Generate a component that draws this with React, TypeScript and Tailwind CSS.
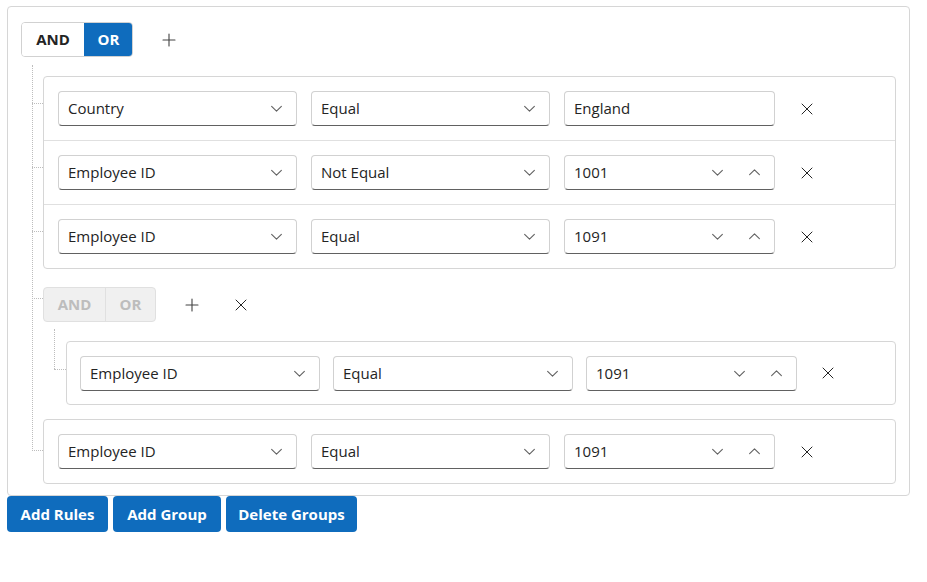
import React from "react";

const font = { fontFamily: '"Segoe UI", "Open Sans", "Noto Sans", sans-serif' };

function ChevronDown() {
  return (
    <svg width="13" height="13" viewBox="0 0 12 12" fill="none">
      <path d="M1.5 4l4.5 4.5L10.5 4" stroke="#616161" strokeWidth="1" strokeLinecap="round" strokeLinejoin="round" />
    </svg>
  );
}
function ChevronUp() {
  return (
    <svg width="13" height="13" viewBox="0 0 12 12" fill="none">
      <path d="M1.5 8l4.5-4.5L10.5 8" stroke="#616161" strokeWidth="1" strokeLinecap="round" strokeLinejoin="round" />
    </svg>
  );
}
function XIcon() {
  return (
    <svg width="12" height="12" viewBox="0 0 12 12" fill="none">
      <path d="M1 1l10 10M11 1L1 11" stroke="#242424" strokeWidth="1" strokeLinecap="round" />
    </svg>
  );
}
function PlusIcon() {
  return (
    <svg width="14" height="14" viewBox="0 0 14 14" fill="none">
      <path d="M7 1v12M1 7h12" stroke="#424242" strokeWidth="1.1" strokeLinecap="round" />
    </svg>
  );
}

function Select({ value, w }: { value: string; w: string }) {
  return (
    <div className={`${w} h-[35px] flex items-center justify-between rounded-[4px] border border-[#d1d1d1] border-b-[#616161] bg-white pl-[9px] pr-[13px] text-[15px] text-[#242424]`}>
      <span>{value}</span>
      <ChevronDown />
    </div>
  );
}

function TextBox({ value }: { value: string }) {
  return (
    <div className="w-[211px] h-[35px] flex items-center rounded-[4px] border border-[#d1d1d1] border-b-[#616161] bg-white pl-[9px] text-[15px] text-[#242424]">
      {value}
    </div>
  );
}

function NumBox({ value }: { value: string }) {
  return (
    <div className="w-[211px] h-[35px] flex items-center rounded-[4px] border border-[#d1d1d1] border-b-[#616161] bg-white pl-[9px] pr-[13px] text-[15px] text-[#242424]">
      <span className="flex-1">{value}</span>
      <span className="mr-[24px] flex"><ChevronDown /></span>
      <span className="flex"><ChevronUp /></span>
    </div>
  );
}

function Row({ field, op, value, num, border }: { field: string; op: string; value: string; num?: boolean; border?: boolean }) {
  return (
    <div className={`${border ? "h-[64px] border-t border-[#e0e0e0]" : "h-[63px]"} flex items-center pl-[14px]`}>
      <Select value={field} w="w-[239px]" />
      <div className="w-[14px]" />
      <Select value={op} w="w-[239px]" />
      <div className="w-[14px]" />
      {num ? <NumBox value={value} /> : <TextBox value={value} />}
      <div className="w-[26px]" />
      <XIcon />
    </div>
  );
}

function HDot({ top, left, width }: { top: number; left: number; width: number }) {
  return (
    <div
      className="absolute border-t border-dotted border-[#bdbdbd]"
      style={{ top, left, width }}
    />
  );
}

export default function App() {
  return (
    <div className="bg-white min-h-[582px] pl-[7px] pt-[6px]" style={font}>
      <div className="w-[903px] h-[490px] rounded-[4px] border border-[#d6d6d6] pl-[13px] pr-[13px] pt-[15px]">
        {/* header */}
        <div className="flex items-center h-[35px]">
          <div className="flex h-[35px] rounded-[4px] overflow-hidden border border-[#d1d1d1]">
            <div className="w-[62px] flex items-center justify-center bg-white text-[15px] font-bold text-[#242424]">AND</div>
            <div className="w-[49px] -my-px -mr-px flex items-center justify-center bg-[#0f6cbd] text-[15px] font-bold text-white">OR</div>
          </div>
          <div className="ml-[29px] flex"><PlusIcon /></div>
        </div>
        {/* content */}
        <div className="relative pl-[22px] pt-[19px] flex flex-col">
          <div className="absolute left-[11px] top-[8px] bottom-[33px] border-l border-dotted border-[#bdbdbd]" />
          <div className="relative">
            <HDot top={27} left={-11} width={11} />
            <HDot top={91} left={-11} width={11} />
            <HDot top={155} left={-11} width={11} />
            <div className="rounded-[4px] border border-[#d6d6d6]">
              <Row field="Country" op="Equal" value="England" />
              <Row field="Employee ID" op="Not Equal" value="1001" num border />
              <Row field="Employee ID" op="Equal" value="1091" num border />
            </div>
          </div>
          {/* nested group */}
          <div className="relative mt-[18px]">
            <HDot top={11} left={-11} width={11} />
            <div className="flex items-center h-[35px]">
              <div className="flex h-[35px] rounded-[4px] overflow-hidden border border-[#e0e0e0] bg-[#f0f0f0]">
                <div className="w-[62px] flex items-center justify-center text-[15px] font-bold text-[#bdbdbd] border-r border-[#e0e0e0]">AND</div>
                <div className="w-[49px] flex items-center justify-center text-[15px] font-bold text-[#bdbdbd]">OR</div>
              </div>
              <div className="ml-[29px] flex"><PlusIcon /></div>
              <div className="ml-[36px] flex"><XIcon /></div>
            </div>
            <div className="relative pl-[23px] pt-[19px]">
              <div className="absolute left-[11px] top-[7px] h-[40px] border-l border-dotted border-[#bdbdbd]" />
              <HDot top={47} left={11} width={12} />
              <div className="rounded-[4px] border border-[#d6d6d6] h-[64px] flex items-center pl-[13px]">
                <Select value="Employee ID" w="w-[240px]" />
                <div className="w-[13px]" />
                <Select value="Equal" w="w-[240px]" />
                <div className="w-[13px]" />
                <NumBox value="1091" />
                <div className="w-[25px]" />
                <XIcon />
              </div>
            </div>
          </div>
          {/* last rule */}
          <div className="relative mt-[14px]">
            <HDot top={31} left={-11} width={11} />
            <div className="rounded-[4px] border border-[#d6d6d6]">
              <Row field="Employee ID" op="Equal" value="1091" num />
            </div>
          </div>
        </div>
      </div>
      <div className="flex gap-[5px]">
        <button className="h-[36px] w-[101px] rounded-[4px] bg-[#0f6cbd] text-white text-[15px] font-bold">Add Rules</button>
        <button className="h-[36px] w-[108px] rounded-[4px] bg-[#0f6cbd] text-white text-[15px] font-bold">Add Group</button>
        <button className="h-[36px] w-[131px] rounded-[4px] bg-[#0f6cbd] text-white text-[15px] font-bold">Delete Groups</button>
      </div>
    </div>
  );
}
